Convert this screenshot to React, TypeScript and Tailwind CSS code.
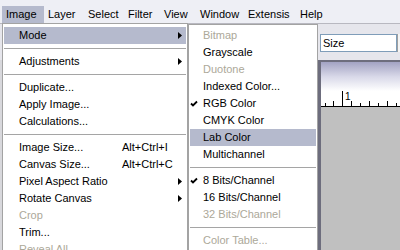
import React from 'react';

type Item =
  | { sep: true }
  | { sep?: false; label: string; arrow?: boolean; hl?: boolean; dis?: boolean; sc?: string; check?: boolean };

const mainItems: Item[] = [
  { label: 'Mode', arrow: true, hl: true },
  { sep: true },
  { label: 'Adjustments', arrow: true },
  { sep: true },
  { label: 'Duplicate...' },
  { label: 'Apply Image...' },
  { label: 'Calculations...' },
  { sep: true },
  { label: 'Image Size...', sc: 'Alt+Ctrl+I' },
  { label: 'Canvas Size...', sc: 'Alt+Ctrl+C' },
  { label: 'Pixel Aspect Ratio', arrow: true },
  { label: 'Rotate Canvas', arrow: true },
  { label: 'Crop', dis: true },
  { label: 'Trim...' },
  { label: 'Reveal All', dis: true },
];

const subItems: Item[] = [
  { label: 'Bitmap', dis: true },
  { label: 'Grayscale' },
  { label: 'Duotone', dis: true },
  { label: 'Indexed Color...' },
  { label: 'RGB Color', check: true },
  { label: 'CMYK Color' },
  { label: 'Lab Color', hl: true },
  { label: 'Multichannel' },
  { sep: true },
  { label: '8 Bits/Channel', check: true },
  { label: '16 Bits/Channel' },
  { label: '32 Bits/Channel', dis: true },
  { sep: true },
  { label: 'Color Table...', dis: true },
];

function Arrow() {
  return (
    <svg className="absolute right-[4px] top-[5px]" width="4" height="7" viewBox="0 0 4 7">
      <polygon points="0,0 4,3.5 0,7" fill="#000" />
    </svg>
  );
}

function Check() {
  return (
    <svg className="absolute left-0 top-[5px]" width="8" height="8" viewBox="0 0 8 8">
      <path d="M1 3.5 L3 5.5 L7 1.5" stroke="#000" strokeWidth="1.8" fill="none" />
    </svg>
  );
}

function Sep() {
  return (
    <div className="flex h-[9px] items-center">
      <div className="h-px w-full bg-[#a5a5a5]" />
    </div>
  );
}

function MainRow({ it }: { it: Exclude<Item, { sep: true }> }) {
  return (
    <div
      className={`relative flex h-[17px] items-center whitespace-nowrap ${it.hl ? 'bg-[#b5bacd]' : ''} ${
        it.dis ? 'text-[#aca899]' : 'text-black'
      }`}
    >
      <span className="w-[118px] pl-[15px]">{it.label}</span>
      {it.sc && <span>{it.sc}</span>}
      {it.arrow && <Arrow />}
    </div>
  );
}

function SubRow({ it }: { it: Exclude<Item, { sep: true }> }) {
  return (
    <div
      className={`relative flex h-[17px] items-center whitespace-nowrap ${it.hl ? 'bg-[#b5bacd]' : ''} ${
        it.dis ? 'text-[#aca899]' : 'text-black'
      }`}
    >
      {it.check && <Check />}
      <span className="pl-[13px]">{it.label}</span>
    </div>
  );
}

const barItems: { label: string; w: string; hl?: boolean }[] = [
  { label: 'Image', w: 'w-[42px]', hl: true },
  { label: 'Layer', w: 'w-[40px]' },
  { label: 'Select', w: 'w-[40px]' },
  { label: 'Filter', w: 'w-[36px]' },
  { label: 'View', w: 'w-[36px]' },
  { label: 'Window', w: 'w-[48px]' },
  { label: 'Extensis', w: 'w-[52px]' },
  { label: 'Help', w: 'w-[40px]' },
];

function Ruler() {
  const ticks = [
    { x: 4, h: 3 },
    { x: 12, h: 5 },
    { x: 30, h: 5 },
    { x: 39, h: 3 },
    { x: 48, h: 5 },
    { x: 57, h: 3 },
    { x: 66, h: 5 },
    { x: 75, h: 3 },
  ];
  return (
    <svg width="79" height="16" viewBox="0 0 79 16" className="block">
      <rect x="0" y="0" width="79" height="16" fill="#fff" />
      <line x1="0" y1="15.5" x2="79" y2="15.5" stroke="#000" />
      <line x1="21.5" y1="0" x2="21.5" y2="15" stroke="#000" />
      {ticks.map((t) => (
        <line key={t.x} x1={t.x + 0.5} y1={15 - t.h} x2={t.x + 0.5} y2="15" stroke="#000" />
      ))}
      <text x="24" y="9" fontSize="10" fontFamily="Liberation Sans, Arial, sans-serif" fill="#000">
        1
      </text>
    </svg>
  );
}

export default function App() {
  return (
    <div className="relative flex h-[250px] w-[400px] flex-col overflow-hidden bg-[#d8d8dc] font-['Liberation_Sans',Arial,sans-serif] text-[11px] leading-none">
      {/* menu bar */}
      <div className="flex h-[23px] shrink-0 bg-[#eeeff5] pl-[2px] pt-[6px]">
        {barItems.map((b) => (
          <div
            key={b.label}
            className={`flex h-[17px] items-center pl-[4px] text-black ${b.w} ${b.hl ? 'bg-[#b5bacd]' : ''}`}
          >
            {b.label}
          </div>
        ))}
      </div>

      {/* app body */}
      <div className="flex flex-1 flex-col">
        <div className="flex h-[37px] shrink-0 justify-end border-t border-[#b8b8c0] bg-[#e6e6ec] pt-[10px]">
          <div className="flex h-[18px] w-[77px] items-center border border-[#7f9db9] bg-white pl-[2px] text-black">
            Size
          </div>
          <div className="h-[18px] w-[3px] border-l border-[#a0a0a0] bg-[#f4f4f4]" />
        </div>
        <div className="flex flex-1">
          <div className="flex-1" />
          <div className="flex w-[83px] flex-col border-l-[4px] border-t-[2px] border-[#6d6d7d]">
            <div className="h-[29px] bg-gradient-to-b from-[#a3a3c3] via-[#d8d8e8] to-[#ffffff]" />
            <Ruler />
            <div className="flex-1 bg-[#c0c0c0]" />
          </div>
        </div>
      </div>

      {/* Image menu */}
      <div className="absolute left-[2px] top-[23px] w-[186px] border border-[#a3a3a3] bg-white px-px pt-[3px]">
        {mainItems.map((it, i) => (it.sep ? <Sep key={i} /> : <MainRow key={i} it={it} />))}
      </div>

      {/* Mode submenu */}
      <div className="absolute left-[188px] top-[24px] w-[130px] border border-[#a3a3a3] bg-white px-px pb-[3px] pt-[2px]">
        {subItems.map((it, i) => (it.sep ? <Sep key={i} /> : <SubRow key={i} it={it} />))}
      </div>
    </div>
  );
}
